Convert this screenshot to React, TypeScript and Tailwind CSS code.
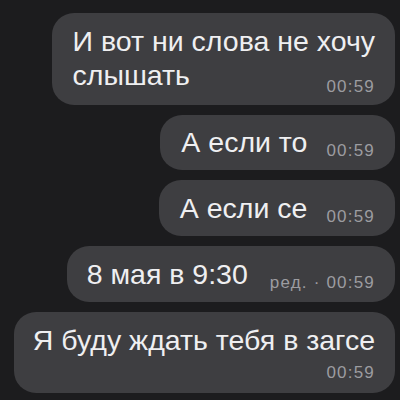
import React from "react";

const Time = ({ children }: { children: React.ReactNode }) => (
  <span className="text-[17px] leading-[17px] tracking-[1.2px] text-[#9c9ca0] whitespace-nowrap">
    {children}
  </span>
);

export default function App() {
  return (
    <div
      className="w-[400px] h-[400px] bg-[#1c1c1e] flex flex-col items-end gap-[10px] pt-[13px] pr-[5px] overflow-hidden"
      style={{ fontFamily: '"Liberation Sans", Arial, sans-serif' }}
    >
      <div className="bg-[#3e3e41] rounded-[22px] pl-[21px] pr-[20px] pt-[11px] pb-[13px] text-[#efeff1] text-[28.5px] leading-[34px]">
        <div className="whitespace-nowrap">И вот ни слова не хочу</div>
        <div className="flex items-end justify-between">
          <span>слышать</span>
          <span className="mb-[-3px] leading-[17px] flex">
            <Time>00:59</Time>
          </span>
        </div>
      </div>

      <div className="bg-[#3e3e41] rounded-[22px] pl-[21px] pr-[20px] pt-[10px] pb-[11px] text-[#efeff1] text-[28.5px] leading-[34px] flex items-end gap-[19px]">
        <span className="whitespace-nowrap">А если то</span>
        <Time>00:59</Time>
      </div>

      <div className="bg-[#3e3e41] rounded-[22px] pl-[21px] pr-[20px] pt-[11px] pb-[11px] text-[#efeff1] text-[28.5px] leading-[34px] flex items-end gap-[19px]">
        <span className="whitespace-nowrap">А если се</span>
        <Time>00:59</Time>
      </div>

      <div className="bg-[#3e3e41] rounded-[22px] pl-[20px] pr-[20px] pt-[11px] pb-[11px] text-[#efeff1] text-[28.5px] leading-[34px] flex items-end gap-[22px]">
        <span className="whitespace-nowrap">8 мая в 9:30</span>
        <Time>ред. · 00:59</Time>
      </div>

      <div className="bg-[#3e3e41] rounded-[22px] pl-[19px] pr-[20px] pt-[11px] pb-[12px] text-[#efeff1] text-[28.5px] leading-[34px] flex flex-col items-end">
        <span className="whitespace-nowrap self-start">Я буду ждать тебя в загсе</span>
        <div className="mt-[7px] flex leading-[17px]">
          <Time>00:59</Time>
        </div>
      </div>
    </div>
  );
}
